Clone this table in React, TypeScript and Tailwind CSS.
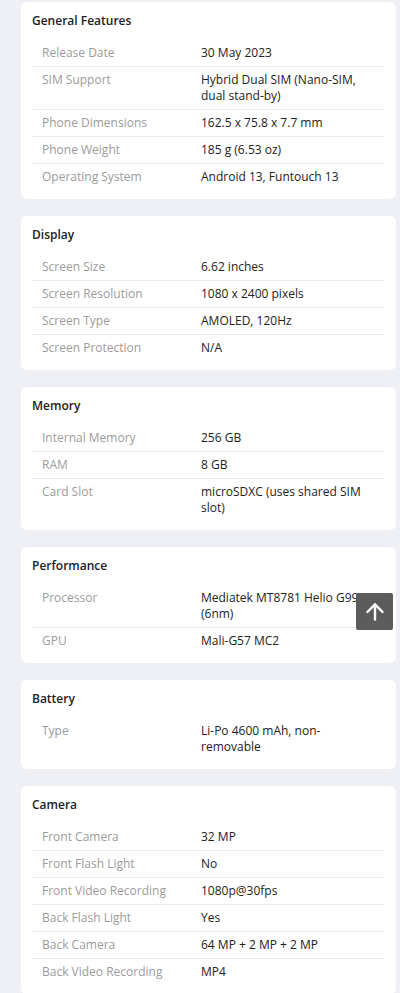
import { ArrowUp } from 'lucide-react';

type Spec = { label: string; value: string };
type Section = { title: string; rows: Spec[] };

const SECTIONS: Section[] = [
  {
    title: 'General Features',
    rows: [
      { label: 'Release Date', value: '30 May 2023' },
      { label: 'SIM Support', value: 'Hybrid Dual SIM (Nano-SIM, dual stand-by)' },
      { label: 'Phone Dimensions', value: '162.5 x 75.8 x 7.7 mm' },
      { label: 'Phone Weight', value: '185 g (6.53 oz)' },
      { label: 'Operating System', value: 'Android 13, Funtouch 13' },
    ],
  },
  {
    title: 'Display',
    rows: [
      { label: 'Screen Size', value: '6.62 inches' },
      { label: 'Screen Resolution', value: '1080 x 2400 pixels' },
      { label: 'Screen Type', value: 'AMOLED, 120Hz' },
      { label: 'Screen Protection', value: 'N/A' },
    ],
  },
  {
    title: 'Memory',
    rows: [
      { label: 'Internal Memory', value: '256 GB' },
      { label: 'RAM', value: '8 GB' },
      { label: 'Card Slot', value: 'microSDXC (uses shared SIM slot)' },
    ],
  },
  {
    title: 'Performance',
    rows: [
      { label: 'Processor', value: 'Mediatek MT8781 Helio G99 (6nm)' },
      { label: 'GPU', value: 'Mali-G57 MC2' },
    ],
  },
  {
    title: 'Battery',
    rows: [{ label: 'Type', value: 'Li-Po 4600 mAh, non-removable' }],
  },
  {
    title: 'Camera',
    rows: [
      { label: 'Front Camera', value: '32 MP' },
      { label: 'Front Flash Light', value: 'No' },
      { label: 'Front Video Recording', value: '1080p@30fps' },
      { label: 'Back Flash Light', value: 'Yes' },
      { label: 'Back Camera', value: '64 MP + 2 MP + 2 MP' },
      { label: 'Back Video Recording', value: 'MP4' },
    ],
  },
];

function SpecCard({ section }: { section: Section }) {
  return (
    <div className="rounded-md bg-white pl-[11px] pr-[12px] pt-[10px] pb-[9px]">
      <h3 className="text-[12px] font-semibold leading-[18px] text-[#222]">
        {section.title}
      </h3>
      <div className="mt-[10px] divide-y divide-[#eceef2]">
        {section.rows.map((r) => (
          <div key={r.label} className="flex py-[5px] text-[12px] leading-[16px]">
            <div className="w-[169px] shrink-0 pl-[10px] text-[#9b9b9b]">{r.label}</div>
            <div className="pr-[4px] font-medium text-[#222]">{r.value}</div>
          </div>
        ))}
      </div>
    </div>
  );
}

export default function App() {
  return (
    <div
      className="relative min-h-[993px] bg-[#eef0f5] pl-[21px] pr-[4px] pt-[2px] pb-6"
      style={{ fontFamily: '"Open Sans", "Noto Sans", sans-serif' }}
    >
      <div className="flex flex-col gap-[17px]">
        {SECTIONS.map((s) => (
          <SpecCard key={s.title} section={s} />
        ))}
      </div>

      {/* back-to-top button */}
      <button className="absolute left-[356px] top-[593px] flex h-[37px] w-[37px] items-center justify-center rounded-[2px] bg-[#5c5c5c] text-white">
        <ArrowUp size={26} strokeWidth={2.2} />
      </button>
    </div>
  );
}
